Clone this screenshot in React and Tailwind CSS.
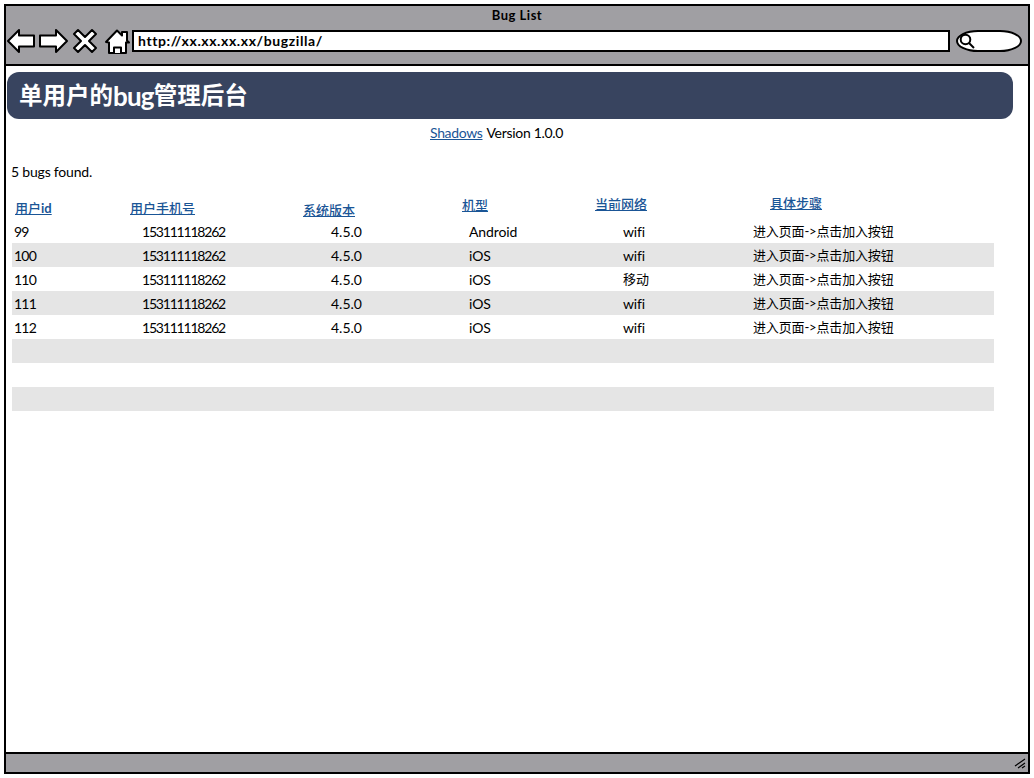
import React from "react";

const headings = [
  { label: "用户", suffix: "id", cell: "w-[115px] pl-[3px] pt-[5px]" },
  { label: "用户手机号", cell: "w-[173px] pl-[3px] pt-[5px]" },
  { label: "系统版本", cell: "w-[159px] pl-[3px] pt-[7px]" },
  { label: "机型", cell: "w-[133px] pl-[3px] pt-[2px]" },
  { label: "当前网络", cell: "w-[175px] pl-[3px] pt-[1px]" },
  { label: "具体步骤", cell: "w-[200px] pl-[3px]" },
];

const steps = "进入页面->点击加入按钮";
const rows = [
  ["99", "153111118262", "4.5.0", "Android", "wifi", steps],
  ["100", "153111118262", "4.5.0", "iOS", "wifi", steps],
  ["110", "153111118262", "4.5.0", "iOS", "移动", steps],
  ["111", "153111118262", "4.5.0", "iOS", "wifi", steps],
  ["112", "153111118262", "4.5.0", "iOS", "wifi", steps],
  [],
  [],
  [],
];

const columns = [
  "w-[128px] tracking-[-0.8px]",
  "w-[189px] tracking-[-1.2px]",
  "w-[138px]",
  "w-[154px] tracking-[-0.1px]",
  "w-[130px] tracking-[-0.2px]",
  "w-[200px] pt-[2px] text-[13px] tracking-[-0.15px]",
];

function NavIcons() {
  return (
    <svg className="h-[30px] w-[126px] shrink-0" viewBox="6 26 126 30" fill="#fff" stroke="#000" strokeWidth="2" strokeLinejoin="round">
      <path d="M8 41 19 30V35.500H34V46.500H19V52Z" />
      <path d="M67 41 56 30V35.500H40V46.500H56V52Z" />
      <path d="M78 30 85 37 92 30 96 34 89 41 96 48 92 52 85 45 78 52 74 48 81 41 74 34Z" />
      <path d="M106 42 117 30.500 122 35.500V32H127V40.500L129 42.500H126V53H109V42.500Z" />
      <path d="M114 53V47.500H121V53" />
    </svg>
  );
}

export default function App() {
  return (
    <div className="h-[778px] w-[1034px] bg-white p-1 font-['Lato','Noto_Sans_CJK_SC',sans-serif] text-[14px] text-black [font-variant-ligatures:none]">
      <div className="flex h-[770px] w-[1026px] flex-col border-2 border-black">
        <header className="h-[60px] shrink-0 border-b-2 border-black bg-[#a09fa3]">
          <div className="h-5 text-center text-[13px] leading-[19px] font-bold tracking-[0.5px]">Bug List</div>
          <div className="flex h-[30px] items-center">
            <NavIcons />
            <div className="flex h-[22px] w-[818px] shrink-0 items-center border-2 border-black bg-white pb-px pl-1 text-[14px] font-bold tracking-[0.6px]">
              http://xx.xx.xx.xx/bugzilla/
            </div>
            <div className="ml-[6px] flex h-[22px] w-[66px] shrink-0 items-center rounded-[22px/11px] border-2 border-black bg-white">
              <svg className="ml-px h-4 w-4" viewBox="0 0 16 16" fill="none" stroke="#000" strokeWidth="2">
                <circle cx="6.500" cy="6.500" r="4.800" />
                <path d="m10 10 5 5" />
              </svg>
            </div>
          </div>
        </header>

        <main className="min-h-0 flex-1 bg-white pl-px pt-[6px]">
          <h1 className="flex h-[47px] w-[1006px] items-center rounded-xl bg-[#38445f] pl-[12px] text-[23.5px] leading-none font-bold text-white">
            单用户的<span className="text-[26px] tracking-[-0.8px]">bug</span>管理后台
          </h1>
          <div className="flex h-[27px] items-center pl-[423px]">
            <a className="tracking-[-0.35px] text-[#1a5596] underline underline-offset-1">Shadows</a>
            <span className="ml-1 tracking-[-0.3px]">Version 1.0.0</span>
          </div>
          <div className="mt-[14px] flex h-[22px] items-center pl-1 tracking-[-0.2px]">5 bugs found.</div>

          <section className="pl-[5px] pt-[13px]">
            <div className="flex h-6 text-[13px] leading-[17px] text-[#1a5596]">
              {headings.map((h) => (
                <div key={h.label} className={h.cell}>
                  <a className="font-medium underline underline-offset-1">
                    {h.label}
                    {h.suffix && <b>{h.suffix}</b>}
                  </a>
                </div>
              ))}
            </div>
            {rows.map((row, i) => (
              <div key={i} className="flex h-6 w-[982px] items-center pl-[2px] odd:bg-[#e5e5e5]">
                {row.map((value, c) => (
                  <div key={c} className={value === "移动" ? "w-[130px] pt-px text-[13px]" : columns[c]}>{value}</div>
                ))}
              </div>
            ))}
          </section>
        </main>

        <footer className="flex h-5 shrink-0 items-center justify-end border-t-2 border-black bg-[#a09fa3] pr-[2px]">
          <svg className="h-3 w-3" viewBox="0 0 12 12" stroke="#000" strokeWidth="1.200">
            <path d="M1 9 11 2M4 11 11 6M8 11 11 9" />
          </svg>
        </footer>
      </div>
    </div>
  );
}
